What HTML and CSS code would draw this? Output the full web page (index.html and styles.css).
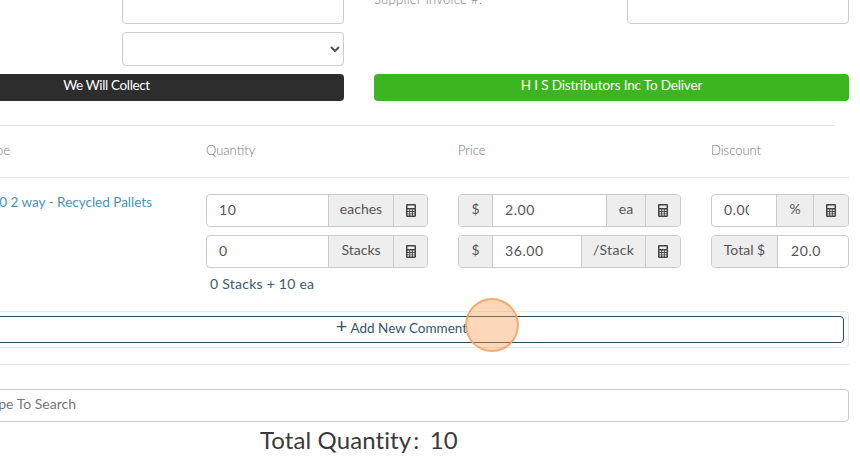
FILE: index.html
```html
<!DOCTYPE html>
<html lang="en">
<head>
<meta charset="utf-8">
<title>Order line</title>
<link rel="stylesheet" href="styles.css">
</head>
<body>
<svg class="defs" width="0" height="0" aria-hidden="true">
  <symbol id="calc" viewBox="0 0 10 13">
    <path fill-rule="evenodd" d="M1.200 0h7.600C9.500 0 10 .5 10 1.200v10.600c0 .7-.5 1.200-1.200 1.200H1.200C.5 13 0 12.500 0 11.800V1.200C0 .5.5 0 1.200 0zM1.500 1.500v2.500h7V1.500zM1.500 5.500v1.500h1.700V5.500zM4.150 5.500v1.500h1.700V5.500zM6.800 5.500v1.500h1.700V5.500zM1.500 8v1.500h1.700V8zM4.150 8v1.500h1.700V8zM6.800 8v1.500h1.700V8zM1.500 10.300v1.300h1.700v-1.300zM4.150 10.300v1.300h1.700v-1.300zM6.800 10.300v1.300h1.700v-1.300z"/>
  </symbol>
</svg>
<div class="page">
  <section class="top">
    <div class="top-col">
      <div class="field"><span class="label"></span><input class="control" type="text"></div>
      <div class="field"><span class="label"></span><select class="control"><option></option></select></div>
      <button class="choice dark" type="button">We Will Collect</button>
    </div>
    <div class="top-col">
      <div class="field"><span class="label">Supplier Invoice #:</span><input class="control" type="text"></div>
      <div class="field spacer"></div>
      <button class="choice green" type="button">H I S Distributors Inc To Deliver</button>
    </div>
  </section>

  <div class="rule first-rule"></div>

  <div class="cols head">
    <div class="first-col">Pallet Type</div>
    <div>Quantity</div>
    <div>Price</div>
    <div>Discount</div>
  </div>

  <div class="cols line">
    <div class="first-col"><a class="product" href="#">1200 x 1000 2 way - Recycled Pallets</a></div>
    <div class="stack">
      <div class="group">
        <input class="cell grow" type="text" value="10">
        <span class="addon w-eaches">eaches</span>
        <span class="addon icon"><svg class="calc"><use href="#calc"/></svg></span>
      </div>
      <div class="group">
        <input class="cell grow" type="text" value="0">
        <span class="addon w-eaches">Stacks</span>
        <span class="addon icon"><svg class="calc"><use href="#calc"/></svg></span>
      </div>
      <div class="summary">0 Stacks + 10 ea</div>
    </div>
    <div class="stack">
      <div class="group">
        <span class="addon dollar">$</span>
        <input class="cell grow" type="text" value="2.00">
        <span class="addon w-ea">ea</span>
        <span class="addon icon"><svg class="calc"><use href="#calc"/></svg></span>
      </div>
      <div class="group">
        <span class="addon dollar">$</span>
        <input class="cell grow" type="text" value="36.00">
        <span class="addon w-stack">/Stack</span>
        <span class="addon icon"><svg class="calc"><use href="#calc"/></svg></span>
      </div>
    </div>
    <div class="stack">
      <div class="group">
        <input class="cell grow clipped" type="text" value="0.00">
        <span class="addon w-pct">%</span>
        <span class="addon icon"><svg class="calc"><use href="#calc"/></svg></span>
      </div>
      <div class="group">
        <span class="addon w-total">Total $</span>
        <input class="cell grow clipped total-input" type="text" value="20.00">
      </div>
    </div>
  </div>

  <div class="comment-panel">
    <button class="add-comment" type="button"><span class="plus">+</span> Add New Comment</button>
  </div>

  <div class="rule second-rule"></div>

  <input class="search" type="text" placeholder="Type To Search">

  <div class="total">Total Quantity<span class="colon">:</span> 10</div>
</div>
<div class="click-marker"></div>
</body>
</html>
```
FILE: styles.css
```css
* { box-sizing: border-box; }
html, body { margin: 0; padding: 0; height: 469px; overflow: hidden; background: #fff; }
body { font-family: Lato, "Open Sans", sans-serif; font-size: 14px; color: #555; position: relative; }
.defs { position: absolute; }

.page { width: 980px; margin: -10px 0 0 -131px; }

.top { display: grid; grid-template-columns: 475px 475px; column-gap: 30px; }
.top-col { display: flex; flex-direction: column; }
.field { display: flex; height: 34px; margin-bottom: 8px; }
.label { width: 253px; font-size: 13px; line-height: 18px; letter-spacing: .3px; color: #777; font-weight: 300; }
.control { width: 222px; height: 34px; border: 1px solid #ccc; border-radius: 4px; background: #fff; font: inherit; color: #555; }
.choice { display: block; width: 100%; height: 27px; padding: 0 0 5px; border: 0; border-radius: 4px; color: #fff; font: 13.5px/21px Lato, sans-serif; }
.dark { background: #2d2d2d; letter-spacing: -.35px; }
.green { background: #3cb521; letter-spacing: -.15px; }

.rule { height: 1px; background: #e6e6e6; }
.first-rule { margin-top: 24px; width: 966px; }
.second-rule { margin-top: 16px; }

.cols { display: grid; grid-template-columns: 337px 252px 253px 138px; }
.head { height: 52px; padding-bottom: 4px; align-items: center; border-bottom: 1px solid #e6e6e6; font-size: 13px; font-weight: 300; color: #777; }
.head .first-col { padding-right: 196px; text-align: right; }
.line { padding-top: 16px; height: 132px; }
.line .first-col { padding-right: 54px; text-align: right; }
.product { display: block; color: #4a93b8; text-decoration: none; font-size: 13.5px; line-height: 17px; white-space: nowrap; }

.stack { display: flex; flex-direction: column; gap: 8px; align-items: flex-start; }
.group { display: flex; height: 33px; border: 1px solid #ccc; border-radius: 4px; overflow: hidden; background: #fff; width: 100%; }
.stack:nth-child(2) .group { width: 222px; }
.stack:nth-child(3) .group { width: 223px; }
.stack:nth-child(4) .group { width: 138px; }
.cell { min-width: 0; border: 0; padding: 0 12px 3px; font: 14px Lato, sans-serif; letter-spacing: .6px; color: #555; outline: 0; background: transparent; }
.clipped { padding-right: 27px; }
.total-input { padding-left: 13px; }
.grow { flex: 1 1 0; }
.addon { display: flex; align-items: center; justify-content: center; flex: none; padding-bottom: 4px; background: #eee; color: #555; font-size: 14px; border-left: 1px solid #ccc; }
.addon:first-child { border-left: 0; border-right: 1px solid #ccc; }
.icon { width: 34px; padding-bottom: 0; }
.stack:nth-child(3) .icon, .stack:nth-child(4) .icon { width: 35px; }
.dollar { width: 34px; }
.w-eaches { width: 65px; }
.w-ea { width: 39px; }
.w-stack { width: 64px; letter-spacing: .3px; }
.w-pct { width: 37px; }
.w-total { width: 66px; }
.calc { width: 10px; height: 13px; fill: #444; }
.summary { margin-top: -1px; padding-left: 4px; color: #3d5a6e; font-size: 14px; line-height: 17px; letter-spacing: .25px; }

.comment-panel { width: 891px; height: 37px; margin: 1px 0 0 89px; padding: 4px 4px 4px 0; border: 1px solid #e3eaee; border-radius: 4px; }
.add-comment { display: block; width: 100%; height: 27px; padding: 0 0 3px; background: #fff; border: 1px solid #2c4a5c; border-radius: 4px; color: #34566e; font: 13.5px/20px Lato, sans-serif; }
.plus { font-size: 20px; line-height: 14px; }

.search { display: block; width: 878px; height: 33px; margin: 24px 0 0 102px; padding: 0 12px 4px; border: 1px solid #ccc; border-radius: 4px; font: 14px Lato, sans-serif; background: #fff; }
.search::placeholder { color: #777; opacity: 1; }

.total { margin-top: 2px; padding-left: 391px; font-size: 24px; line-height: 32px; font-weight: 400; color: #3a3a3a; letter-spacing: .1px; white-space: nowrap; }
.colon { margin-left: 2px; margin-right: 4px; }

.click-marker { position: absolute; left: 465px; top: 298px; width: 54px; height: 54px; border-radius: 50%; background: rgba(247,154,80,.4); border: 2px solid rgba(242,160,95,.8); }
```
